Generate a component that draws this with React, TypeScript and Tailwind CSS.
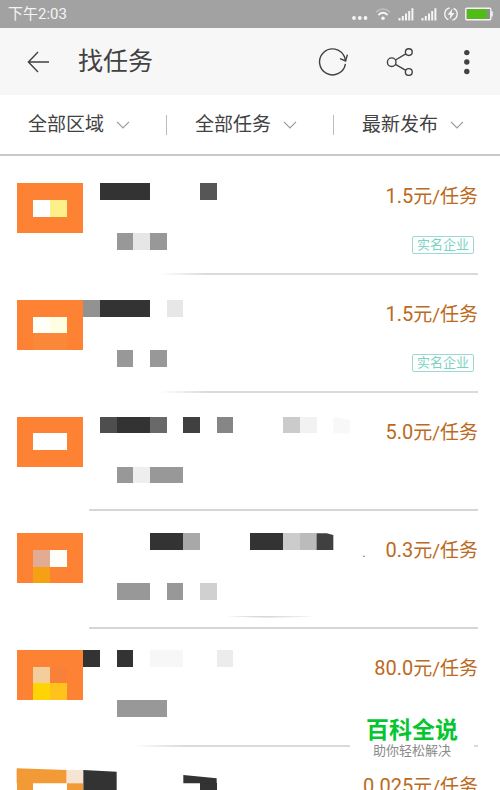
import clsx from "clsx";
import type { JSX } from "react";

type Task = {
	divider: string;
	id: number;
	price: string;
	verified?: boolean;
};

// x, y, width, height in mosaic cells, then the fill
type Cell = [number, number, number, number, string];

const tasks: Task[] = [
	{ divider: "ml-[160px] h-0.5 bg-linear-to-r from-white to-[#dadada] to-15%", id: 1, price: "1.5", verified: true },
	{ divider: "ml-[160px] h-0.5 bg-linear-to-r from-white to-[#dadada] to-15%", id: 2, price: "1.5", verified: true },
	{ divider: "ml-[89px] h-0.5 bg-[#d6d6d6]", id: 3, price: "5.0" },
	{ divider: "ml-[89px] h-0.5 bg-[#d6d6d6]", id: 4, price: "0.3" },
	{ divider: "ml-[133px] h-0.5 bg-linear-to-r from-white to-[#dadada] to-15%", id: 5, price: "80.0" },
	{ divider: "ml-[89px] h-0.5 bg-[#d6d6d6]", id: 6, price: "0.025" },
];

const filters = [
	{ label: "区域", value: "全部区域" },
	{ label: "任务", value: "全部任务" },
	{ label: "排序", value: "最新发布" },
];

const cells: Cell[] = [
	[1, 11, 4, 3, "#fe8233"],
	[2, 12, 1, 1, "#ffffff"],
	[3, 12, 1, 1, "#fdf08a"],
	[6, 11, 3, 1, "#333333"],
	[12, 11, 1, 1, "#565656"],
	[7, 14, 1, 1, "#989898"],
	[8, 14, 1, 1, "#e6e6e6"],
	[9, 14, 1, 1, "#989898"],

	[1, 18, 4, 3, "#fe8233"],
	[2, 19, 1, 1, "#fffffa"],
	[3, 19, 1, 1, "#fffee2"],
	[2, 20, 2, 1, "#fa8838"],
	[5, 18, 1, 1, "#929292"],
	[6, 18, 3, 1, "#333333"],
	[10, 18, 1, 1, "#e7e7e7"],
	[7, 21, 1, 1, "#989898"],
	[9, 21, 1, 1, "#989898"],

	[1, 25, 4, 3, "#fe8233"],
	[2, 26, 2, 1, "#ffffff"],
	[6, 25, 1, 1, "#4e4e4e"],
	[7, 25, 2, 1, "#333333"],
	[9, 25, 1, 1, "#696969"],
	[11, 25, 1, 1, "#404040"],
	[13, 25, 1, 1, "#868686"],
	[17, 25, 1, 1, "#cbcbcb"],
	[18, 25, 1, 1, "#f2f2f2"],
	[7, 28, 1, 1, "#989898"],
	[8, 28, 1, 1, "#eeeeee"],
	[9, 28, 2, 1, "#989898"],

	[1, 32, 4, 3, "#fe8233"],
	[2, 33, 1, 1, "#e2ac94"],
	[3, 33, 1, 1, "#fffffa"],
	[2, 34, 1, 1, "#f6a114"],
	[9, 32, 2, 1, "#333333"],
	[11, 32, 1, 1, "#a8a8a8"],
	[15, 32, 2, 1, "#333333"],
	[17, 32, 1, 1, "#cccccc"],
	[18, 32, 1, 1, "#bbbbbb"],
	[7, 35, 2, 1, "#989898"],
	[10, 35, 1, 1, "#989898"],
	[12, 35, 1, 1, "#d0d0d0"],

	[1, 39, 4, 3, "#fe8233"],
	[2, 40, 1, 1, "#f4cd9e"],
	[3, 40, 1, 1, "#f98038"],
	[2, 41, 1, 1, "#ffd404"],
	[3, 41, 1, 1, "#ffc31c"],
	[5, 39, 1, 1, "#333333"],
	[7, 39, 1, 1, "#333333"],
	[9, 39, 2, 1, "#f7f7f7"],
	[13, 39, 1, 1, "#ececec"],
	[7, 42, 3, 1, "#989898"],

	[1, 47, 1, 1, "#f29a35"],
	[4, 47, 1, 1, "#f29a35"],
	[12, 47, 1, 1, "#333333"],
];

export default function App(): JSX.Element {
	return (
		<div className="relative flex h-screen flex-col overflow-hidden bg-white font-['Roboto','Noto_Sans_CJK_SC',sans-serif] text-[#424242]">
			<StatusBar />
			<Header />
			<FilterBar />
			<ul className="min-h-0 flex-1 overflow-hidden pt-px">
				{tasks.map((task) => (
					<TaskRow key={task.id} task={task} />
				))}
			</ul>
			<Mosaic />
			<div className="absolute right-[26px] bottom-[30px] flex w-[124px] flex-col items-center bg-white pt-2">
				<strong className="font-bold text-[#06c62f] text-[23px] leading-[22px]">百科全说</strong>
				<span className="text-[#8a8a8a] text-[13px] leading-[18px]">助你轻松解决</span>
			</div>
		</div>
	);
}

function StatusBar(): JSX.Element {
	return (
		<div className="flex h-7 shrink-0 items-center justify-between bg-[#a2a2a2] pr-[7px] pl-2 text-[#f4f4f4]">
			<time className="text-[15px] leading-7">下午2:03</time>
			<div className="flex items-center gap-[7px]">
				<svg aria-hidden="true" className="h-3.5 w-4" fill="currentColor" viewBox="0 0 16 14">
					<circle cx="2" cy="11" r="1.9" />
					<circle cx="7.8" cy="11" r="1.9" />
					<circle cx="13.5" cy="11" r="1.9" />
				</svg>
				<svg aria-hidden="true" className="h-3.5 w-4" fill="none" stroke="currentColor" viewBox="0 0 16 14">
					<path d="M1 5.2Q8-1.2 15 5.2" opacity=".35" strokeWidth="1.6" />
					<path d="M3.4 8Q8 3.6 12.6 8" strokeWidth="1.8" />
					<circle cx="8" cy="11.2" fill="currentColor" r="1.8" stroke="none" />
				</svg>
				<SignalIcon />
				<SignalIcon />
				<svg aria-hidden="true" className="h-3.5 w-3.5" fill="none" stroke="currentColor" viewBox="0 0 14 14">
					<path d="M5.6.9A6.3 6.3 0 0 0 4.4 12.7M8.4 13.1A6.3 6.3 0 0 0 9.6 1.3" strokeWidth="1.4" />
					<path d="M8.4 1.6 3.6 7.8H6.4L5.6 12.4 10.4 6H7.6Z" fill="currentColor" stroke="none" />
				</svg>
				<svg aria-hidden="true" className="h-3.5 w-7" viewBox="0 0 28 14">
					<rect fill="#8c8c8c" height="11.6" rx="1" stroke="#f4f4f4" strokeWidth="1.4" width="25" x=".8" y="1.2" />
					<rect fill="#4fbd13" height="9.4" width="20" x="2" y="2.3" />
					<rect fill="#f4f4f4" height="5" width="1.6" x="26.2" y="4.5" />
				</svg>
			</div>
		</div>
	);
}

function SignalIcon(): JSX.Element {
	return (
		<svg aria-hidden="true" className="h-3.5 w-4" fill="currentColor" viewBox="0 0 16 14">
			<path d="M.5 11h2v2.4h-2zM3.8 9h2v4.4h-2zM7 6.6h2v6.8H7zM10.2 4h2v9.4h-2zM13.4 1.2h2v12.2h-2z" />
		</svg>
	);
}

function Header(): JSX.Element {
	return (
		<header className="flex h-[67px] shrink-0 items-center bg-[#f7f7f7] pr-[18px] pl-[26px]">
			<button aria-label="返回" type="button">
				<svg className="h-6 w-6" fill="none" stroke="currentColor" strokeWidth="1.4" viewBox="0 0 24 24">
					<path d="M12 2 2.4 12 12 22M2.4 12H23" />
				</svg>
			</button>
			<h1 className="ml-7 text-[25px] leading-8">找任务</h1>
			<div className="ml-auto flex items-center gap-[38px]">
				<button aria-label="刷新" type="button">
					<svg className="h-[30px] w-[30px]" fill="none" stroke="currentColor" strokeWidth="1.4" viewBox="0 0 30 30">
						<path d="M27.4 16.8A13 13 0 1 1 26.4 9.6L27.6 14" />
						<path d="M22 11.6 27.6 14 29.4 7.6" />
					</svg>
				</button>
				<button aria-label="分享" type="button">
					<svg className="h-7 w-7" fill="none" stroke="currentColor" strokeWidth="1.4" viewBox="0 0 28 28">
						<circle cx="5.7" cy="14.2" r="4.3" />
						<circle cx="22.8" cy="4.1" r="3.4" />
						<circle cx="22.8" cy="24" r="3.4" />
						<path d="M9.5 12 19.8 5.9M9.5 16.4 19.8 22.3" />
					</svg>
				</button>
				<button aria-label="更多" type="button">
					<svg className="h-[30px] w-[30px]" fill="currentColor" viewBox="0 0 30 30">
						<circle cx="14.8" cy="5.6" r="2.7" />
						<circle cx="14.8" cy="15" r="2.7" />
						<circle cx="14.8" cy="24.5" r="2.7" />
					</svg>
				</button>
			</div>
		</header>
	);
}

function FilterBar(): JSX.Element {
	return (
		<div className="flex h-[61px] shrink-0 items-center border-[#c9c9c9] border-b-2">
			{filters.map((filter, index) => (
				<label
					className={clsx(
						"flex h-5 flex-1 items-center pl-7",
						index < filters.length - 1 && "border-[#bdbdbd] border-r"
					)}
					key={filter.value}
				>
					<select
						aria-label={filter.label}
						className="w-[84px] appearance-none bg-transparent text-[19px] leading-7 outline-none"
					>
						<option>{filter.value}</option>
					</select>
					<svg
						aria-hidden="true"
						className="ml-1 h-2 w-3.5 text-[#9a9a9a]"
						fill="none"
						stroke="currentColor"
						strokeWidth="1.2"
						viewBox="0 0 14 8"
					>
						<path d="M1 .8 7 7 13 .8" />
					</svg>
				</label>
			))}
		</div>
	);
}

function TaskRow({ task }: { task: Task }): JSX.Element {
	return (
		<li className="flex h-[118px] flex-col pr-[22px]">
			<div className="flex flex-1 flex-col items-end pt-[25px]">
				<p className="text-[#bb6a22] text-[19px] leading-7">
					<span className="text-[20px]">{task.price}</span>元/任务
				</p>
				{task.verified && (
					<span className="mt-[25px] mr-1 rounded-xs border border-[#9adbd1] px-1 text-[#7ad2c3] text-[13px] leading-4">
						实名企业
					</span>
				)}
			</div>
			<div className={task.divider} />
		</li>
	);
}

// Pixelated cover over the icon and title of every task, 30 cells across.
function Mosaic(): JSX.Element {
	return (
		<svg
			aria-hidden="true"
			className="pointer-events-none absolute top-0 left-0 h-[800px] w-[500px]"
			viewBox="0 0 30 48"
		>
			{cells.map(([x, y, width, height, fill]) => (
				<rect
					fill={fill}
					height={height}
					key={`${x}-${y}`}
					shapeRendering="crispEdges"
					width={width}
					x={x}
					y={y}
				/>
			))}
			<path d="M20 25 21 25.2V26H20Z" fill="#f8f8f8" />
			<path d="M19 32H19.6L20 32.1V33H19Z" fill="#404040" />
			<path d="M21.8 33.35h.07v.07h-.07z" fill="#555555" />
			<path d="M13.6 37 16 36.97 18.9 37 16 37.05Z" fill="#cccccc" />
			<path d="M1 46.1 4 46.2V47H1Z" fill="#f29a35" />
			<path d="M4 46.2 5 46.2V47H4Z" fill="#f5e4d4" />
			<path d="M5 46.2 7 46.3V48H5Z" fill="#333333" />
			<path d="M11 46.5 13 46.7V47H11Z" fill="#333333" />
		</svg>
	);
}
